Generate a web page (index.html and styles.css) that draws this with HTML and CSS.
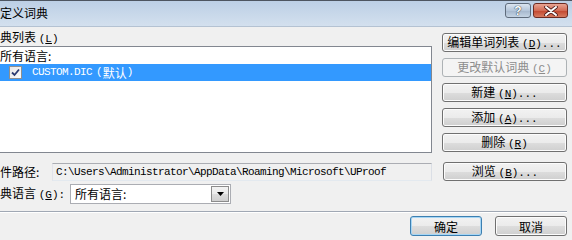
FILE: index.html
```html
<!DOCTYPE html>
<html>
<head>
<meta charset="utf-8">
<link rel="stylesheet" href="styles.css">
</head>
<body>
<div class="window">
  <div class="titlebar">
    <span class="title">定义词典</span>
    <div class="caption-btns">
      <span class="cap help">?</span>
      <span class="cap close"><svg width="14" height="10" viewBox="0 0 14 10"><path d="M2 1 L12 9 M12 1 L2 9" stroke="#4a1a1a" stroke-width="3.6" stroke-linecap="round"/><path d="M2 1 L12 9 M12 1 L2 9" stroke="#fff" stroke-width="2" stroke-linecap="round"/></svg></span>
    </div>
  </div>
  <div class="client">
    <div class="top">
      <div class="left">
        <div class="label lbl-list">典列表 <span class="acc">(<u>L</u>)</span></div>
        <div class="listbox">
          <div class="item first">所有语言:</div>
          <div class="item sel"><span class="chk"><svg width="9" height="9" viewBox="0 0 9 9"><path d="M1 4.5 L3.5 7 L8 1.5" fill="none" stroke="#2a3a70" stroke-width="1.8"/></svg></span><span class="mono">CUSTOM.DIC</span> <span class="acc">(</span>默认<span class="acc">)</span></div>
        </div>
      </div>
      <div class="btncol">
        <button class="btn">编辑单词列表 <span class="acc">(<u>D</u>)...</span></button>
        <button class="btn disabled">更改默认词典 <span class="acc">(<u>C</u>)</span></button>
        <button class="btn">新建 <span class="acc">(<u>N</u>)...</span></button>
        <button class="btn">添加 <span class="acc">(<u>A</u>)...</span></button>
        <button class="btn">删除 <span class="acc">(<u>R</u>)</span></button>
      </div>
    </div>
    <div class="row path-row">
      <div class="label lbl-path">件路径:</div>
      <div class="pathbox"><span class="mono">C:\Users\Administrator\AppData\Roaming\Microsoft\UProof</span></div>
      <button class="btn browse">浏览 <span class="acc">(<u>B</u>)...</span></button>
    </div>
    <div class="row lang-row">
      <div class="label lbl-lang">典语言 <span class="acc">(<u>G</u>):</span></div>
      <div class="combo">
        <span class="combo-text">所有语言:</span>
        <span class="drop"><svg width="7" height="4" viewBox="0 0 7 4"><path d="M0 0 H7 L3.5 4 Z" fill="#000"/></svg></span>
      </div>
    </div>
    <div class="sep"></div>
    <div class="footer">
      <button class="btn ok">确定</button>
      <button class="btn cancel">取消</button>
    </div>
  </div>
</div>
</body>
</html>
```

FILE: styles.css
```css
* { box-sizing: border-box; }
html, body {
  margin: 0;
  padding: 0;
  width: 572px;
  height: 240px;
  overflow: hidden;
  background: #f0f0f0;
}
body {
  font-family: "Noto Sans CJK SC", "Liberation Sans", sans-serif;
  font-size: 12px;
  color: #000;
}
.window {
  width: 572px;
  height: 240px;
  display: flex;
  flex-direction: column;
}
.titlebar {
  height: 27px;
  border-top: 1px solid #4d5560;
  background: linear-gradient(#bccfe5, #d3e0ee);
  display: flex;
  align-items: center;
  justify-content: space-between;
  padding-right: 4px;
  border-bottom: 1px solid #b4c2d2;
}
.title {
  font-size: 12px;
  line-height: 14px;
  margin-top: -1px;
}
.caption-btns {
  display: flex;
  gap: 2px;
  align-self: flex-start;
  margin-top: 2px;
}
.cap {
  height: 15px;
  border: 1px solid #5f6c7c;
  border-radius: 3px;
  display: flex;
  align-items: center;
  justify-content: center;
}
.help {
  width: 26px;
  background: linear-gradient(#dbe5f0, #b5c6da 50%, #a4b6cc 51%, #c5d4e4);
  color: #fff;
  font-family: "Liberation Sans", sans-serif;
  font-weight: bold;
  font-size: 12px;
  text-shadow: 0 0 1px #203040, 0 0 1px #203040;
}
.close {
  width: 35px;
  background: linear-gradient(#e8a493, #d26b55 50%, #c2452d 51%, #d67a60);
  border-color: #6d2b22;
}
.client {
  flex: 1;
  display: flex;
  flex-direction: column;
  padding-right: 5px;
}
.top {
  display: flex;
}
.left {
  width: 432px;
  display: flex;
  flex-direction: column;
}
.label {
  line-height: 14px;
  white-space: nowrap;
}
.acc {
  font-family: "Liberation Mono", monospace;
  font-size: 11px;
}
.lbl-list {
  padding-top: 3px;
  height: 19px;
}
.listbox {
  height: 107px;
  background: #fff;
  border: 1px solid #828790;
  border-left: none;
  padding-top: 1px;
}
.item {
  height: 15px;
  line-height: 15px;
  white-space: nowrap;
}
.item.sel {
  height: 17px;
  line-height: 17px;
  background: #3399ff;
  color: #fff;
  display: flex;
  align-items: center;
  margin-top: 1px;
}
.chk {
  width: 13px;
  height: 13px;
  margin-left: 9px;
  margin-right: 10px;
  border: 1px solid #8e8f8f;
  background: linear-gradient(135deg, #e6e6e6, #fbfbfb);
  display: flex;
  align-items: center;
  justify-content: center;
}
.mono {
  font-family: "Liberation Mono", monospace;
  font-size: 11px;
  letter-spacing: -0.6px;
  margin-right: 4px;
}
.btncol {
  margin-left: 10px;
  width: 125px;
  padding-top: 6px;
  display: flex;
  flex-direction: column;
  gap: 6px;
}
.btn {
  font-family: "Noto Sans CJK SC", sans-serif;
  font-size: 12px;
  height: 19px;
  padding: 0;
  border: 1px solid #707070;
  border-radius: 3px;
  background: linear-gradient(#f2f2f2, #ebebeb 50%, #dddddd 51%, #cfcfcf);
  box-shadow: inset 0 0 0 1px #fcfcfc;
  color: #000;
  line-height: 15px;
  white-space: nowrap;
}
.btn.disabled {
  border-color: #adb2b5;
  background: #f4f4f4;
  box-shadow: none;
  color: #8d8d8d;
}
.row {
  display: flex;
  align-items: center;
}
.path-row {
  margin-top: 9px;
  height: 19px;
}
.lbl-path {
  width: 52px;
}
.pathbox {
  width: 380px;
  height: 18px;
  border: 1px solid #abadb3;
  border-left-color: #e2e3ea;
  border-right-color: #dbdfe6;
  border-bottom-color: #e3e9ef;
  background: #f0f0f0;
  display: flex;
  align-items: center;
  padding-left: 3px;
}
.browse {
  margin-left: 11px;
  width: 124px;
  height: 19px;
}
.lang-row {
  margin-top: 3px;
  height: 20px;
}
.lbl-lang {
  width: 70px;
}
.combo {
  width: 161px;
  height: 20px;
  border: 1px solid #abadb3;
  background: #fff;
  display: flex;
  align-items: center;
  justify-content: space-between;
  padding-left: 4px;
  padding-right: 1px;
}
.combo-text {
  line-height: 14px;
}
.drop {
  width: 18px;
  height: 16px;
  border: 1px solid #8c8c8c;
  background: linear-gradient(#f2f2f2, #ebebeb 50%, #dddddd 51%, #cfcfcf);
  display: flex;
  align-items: center;
  justify-content: center;
}
.sep {
  margin-top: 7px;
  height: 2px;
  border-top: 1px solid #a0a8b4;
  border-bottom: 1px solid #fff;
}
.footer {
  display: flex;
  justify-content: flex-end;
  gap: 13px;
  margin-top: 3px;
}
.ok, .cancel {
  width: 72px;
  height: 20px;
}
.ok {
  border-color: #3c7fb1;
  box-shadow: inset 0 0 0 1px #a6d6f5;
}
```
